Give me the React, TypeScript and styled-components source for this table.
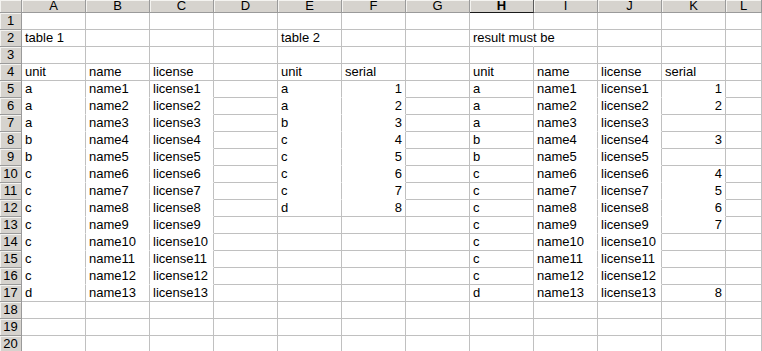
import React from "react";
import styled, { createGlobalStyle, css } from "styled-components";

const GlobalStyle = createGlobalStyle`
  html, body {
    margin: 0;
    padding: 0;
    background: #ffffff;
    overflow: hidden;
  }
  body {
    font-family: "Liberation Sans", Arial, sans-serif;
  }
`;

const COLUMNS = ["A", "B", "C", "D", "E", "F", "G", "H", "I", "J", "K", "L"];
const ROW_COUNT = 20;
const ACTIVE_COLUMN = "H";

const GRID = "#c0c0c0";
const HEAD_BG = "#d6d3ce";
const HEAD_LINE = "#9a9a9a";

const Sheet = styled.div`
  display: grid;
  grid-template-columns: 22px repeat(11, 64px) 36px;
  grid-template-rows: 13px repeat(${ROW_COUNT}, 17px);
  width: 762px;
  height: 351px;
  overflow: hidden;
  font-family: "Liberation Sans", Arial, sans-serif;
  font-size: 13px;
  color: #000000;
  background: #ffffff;
`;

const HeaderBase = css`
  box-sizing: border-box;
  background: ${HEAD_BG};
  border-right: 1px solid ${HEAD_LINE};
  border-bottom: 1px solid ${HEAD_LINE};
  box-shadow: inset 1px 1px 0 #f4f3f0;
  color: #000000;
  overflow: hidden;
  white-space: nowrap;
`;

const Corner = styled.div`
  ${HeaderBase};
`;

const ColHeader = styled.div<{ $active?: boolean }>`
  ${HeaderBase};
  text-align: center;
  line-height: 11px;
  font-size: 13px;
  ${(p) =>
    p.$active &&
    css`
      font-weight: bold;
      border-bottom: 1px solid #1a1a1a;
      border-right: 1px solid #5a5a5a;
    `}
`;

const RowHeader = styled.div`
  ${HeaderBase};
  text-align: center;
  line-height: 16px;
  font-size: 13px;
`;

const Cell = styled.div<{
  $align: "left" | "right";
  $openBottom: boolean;
  $openRight: boolean;
}>`
  box-sizing: border-box;
  position: relative;
  border-right: 1px solid ${(p) => (p.$openRight ? "transparent" : GRID)};
  border-bottom: 1px solid ${(p) => (p.$openBottom ? "#ffffff" : GRID)};
  padding: 0 3px 0 3px;
  line-height: 16px;
  white-space: nowrap;
  overflow: visible;
  text-align: ${(p) => p.$align};
  z-index: ${(p) => (p.$openRight ? 1 : 0)};
`;

type CellValue = string | number;
type SheetData = Record<string, CellValue>;

const units = ["a", "a", "a", "b", "b", "c", "c", "c", "c", "c", "c", "c", "d"];
const serialsOf: Record<number, number> = { 5: 1, 6: 2, 8: 3, 10: 4, 11: 5, 12: 6, 13: 7, 17: 8 };
const table2: [string, number][] = [
  ["a", 1],
  ["a", 2],
  ["b", 3],
  ["c", 4],
  ["c", 5],
  ["c", 6],
  ["c", 7],
  ["d", 8],
];

const buildData = () => {
  const data: SheetData = {};
  const pasted = new Set<string>();

  data["A2"] = "table 1";
  data["E2"] = "table 2";
  data["H2"] = "result must be";

  data["A4"] = "unit";
  data["B4"] = "name";
  data["C4"] = "license";
  data["E4"] = "unit";
  data["F4"] = "serial";
  data["H4"] = "unit";
  data["I4"] = "name";
  data["J4"] = "license";
  data["K4"] = "serial";

  units.forEach((u, i) => {
    const row = i + 5;
    data[`A${row}`] = u;
    data[`B${row}`] = `name${i + 1}`;
    data[`C${row}`] = `license${i + 1}`;
    data[`H${row}`] = u;
    data[`I${row}`] = `name${i + 1}`;
    data[`J${row}`] = `license${i + 1}`;
    ["A", "B", "C", "I", "J"].forEach((c) => pasted.add(`${c}${row}`));
  });

  table2.forEach(([u, s], i) => {
    const row = i + 5;
    data[`E${row}`] = u;
    data[`F${row}`] = s;
    pasted.add(`E${row}`);
    pasted.add(`F${row}`);
  });

  Object.entries(serialsOf).forEach(([row, s]) => {
    data[`K${row}`] = s;
    pasted.add(`K${row}`);
  });

  return { data, pasted };
};

const { data, pasted } = buildData();

export default function App() {
  const rows = Array.from({ length: ROW_COUNT }, (_, i) => i + 1);

  return (
    <>
      <GlobalStyle />
      <Sheet>
        <Corner />
        {COLUMNS.map((c) => (
          <ColHeader key={c} $active={c === ACTIVE_COLUMN}>
            {c}
          </ColHeader>
        ))}
        {rows.map((r) => (
          <React.Fragment key={r}>
            <RowHeader>{r}</RowHeader>
            {COLUMNS.map((c, ci) => {
              const ref = `${c}${r}`;
              const value = data[ref];
              const nextCol = COLUMNS[ci + 1];
              const spills =
                typeof value === "string" &&
                value.length > 9 &&
                nextCol !== undefined &&
                data[`${nextCol}${r}`] === undefined;
              return (
                <Cell
                  key={ref}
                  $align={typeof value === "number" ? "right" : "left"}
                  $openBottom={pasted.has(ref) && pasted.has(`${c}${r + 1}`)}
                  $openRight={spills}
                >
                  {value ?? ""}
                </Cell>
              );
            })}
          </React.Fragment>
        ))}
      </Sheet>
    </>
  );
}
